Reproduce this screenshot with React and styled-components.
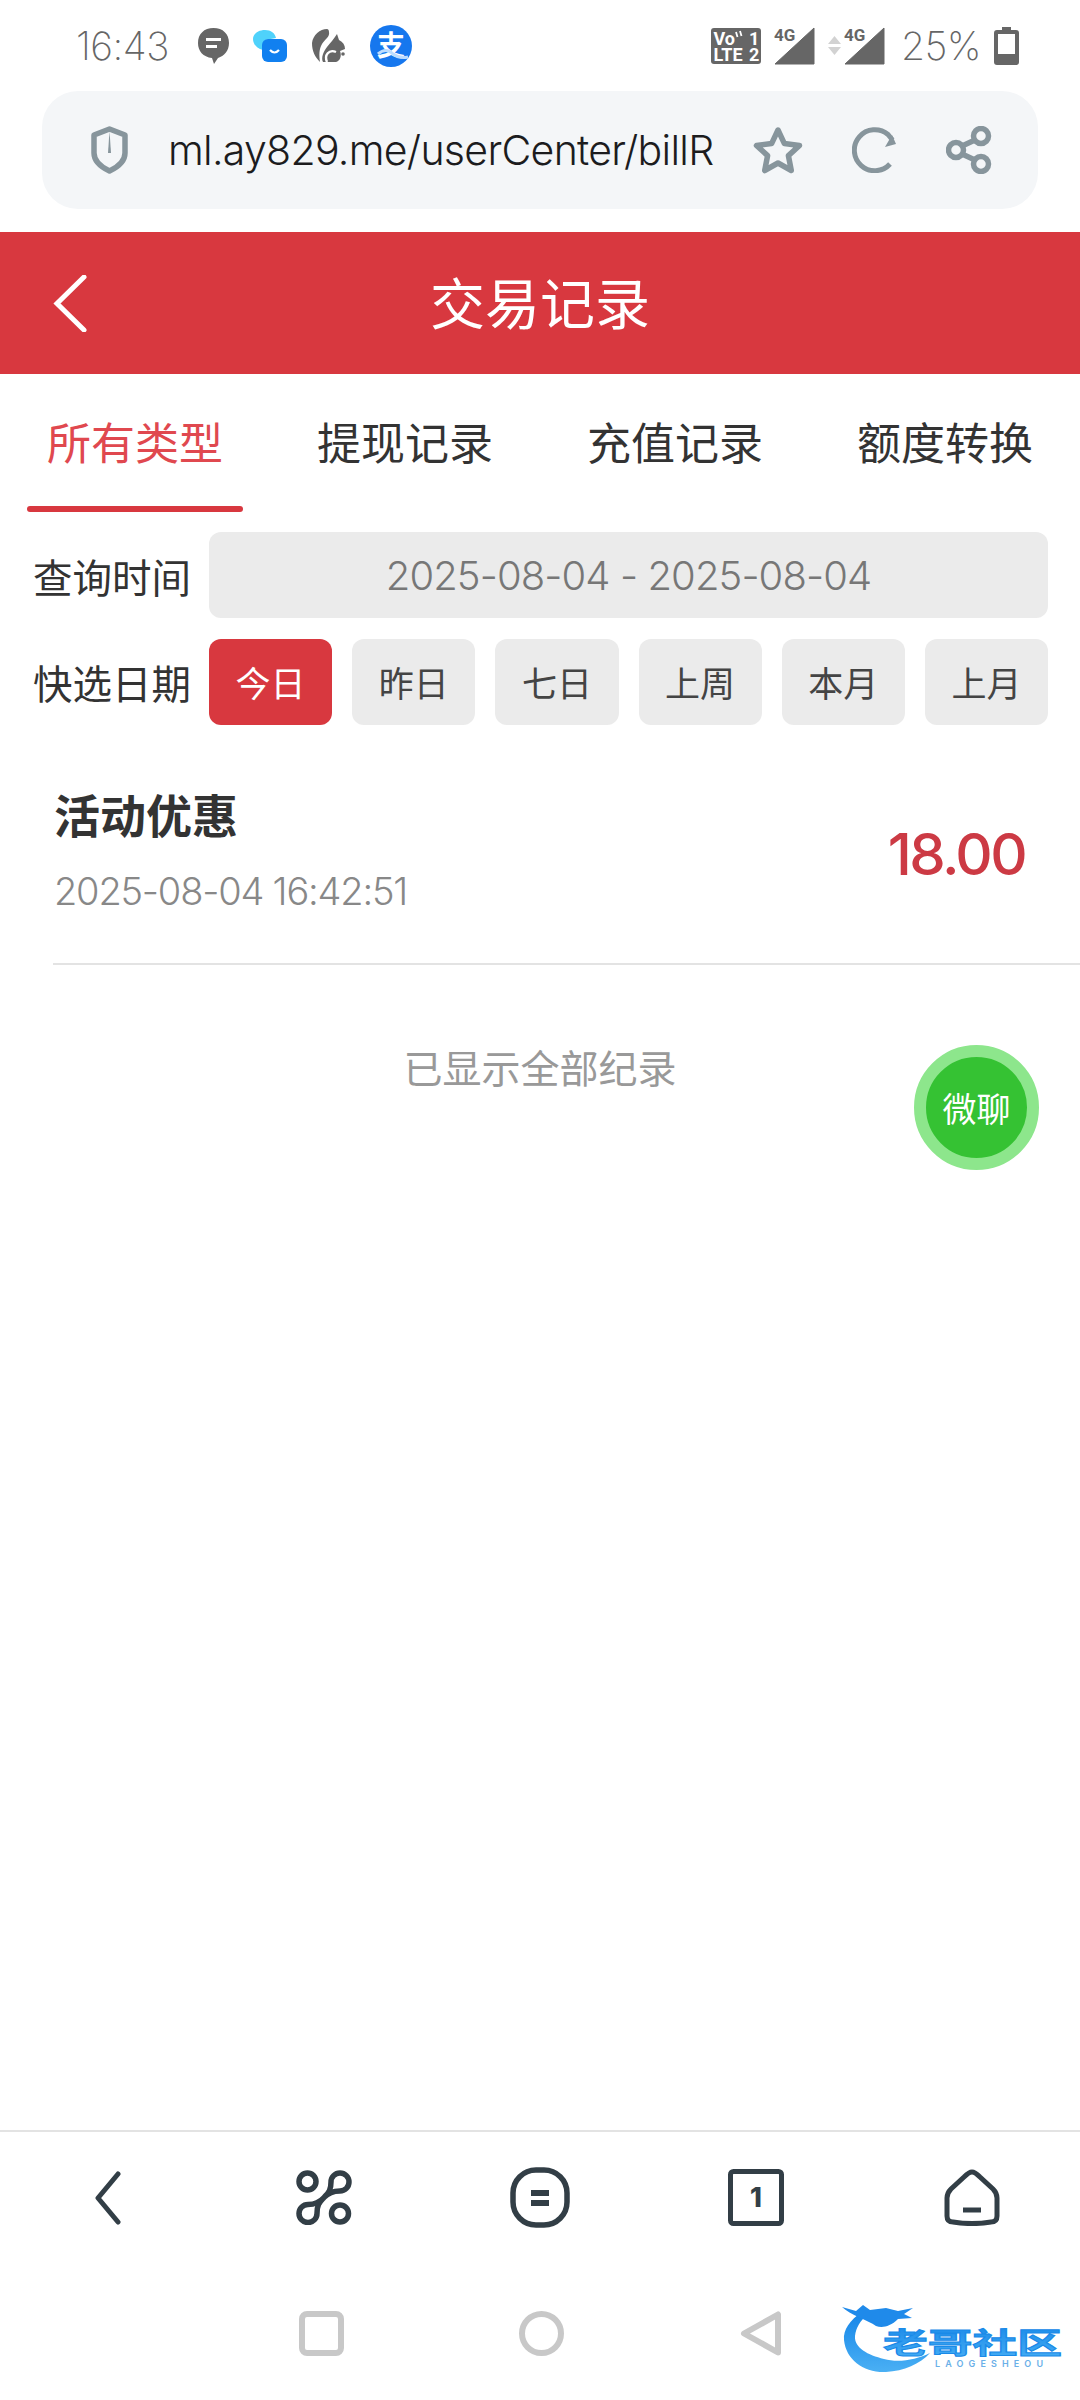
import React from "react";
import styled, { createGlobalStyle } from "styled-components";

const FONT = `Inter, "Noto Sans CJK SC", sans-serif`;
const RED = "#d8383f";
const ICON_GREY = "#87959c";
const ICON_DARK = "#323e46";

const GlobalStyle = createGlobalStyle`
  html, body {
    margin: 0;
    padding: 0;
    background: #fff;
  }
  body {
    font-family: ${FONT};
  }
`;

const Screen = styled.div`
  position: relative;
  width: 1080px;
  height: 2400px;
  display: flex;
  flex-direction: column;
  background: #fff;
  overflow: hidden;
`;

const StatusBar = styled.div`
  height: 91px;
  flex: none;
  display: flex;
  align-items: center;
  justify-content: space-between;
  padding: 0 61px 0 76px;
  color: #666;
`;

const StatusGroup = styled.div`
  display: flex;
  align-items: center;
  gap: ${(p) => p.$gap}px;
`;

const StatusText = styled.span`
  font-size: 39px;
  font-weight: 200;
  letter-spacing: -0.5px;
  margin-right: ${(p) => p.$after || 0}px;
  margin-left: ${(p) => p.$before || 0}px;
`;

const UrlRow = styled.div`
  flex: none;
  padding: 0 42px;
  margin-bottom: 23px;
`;

const UrlBar = styled.div`
  height: 118px;
  display: flex;
  align-items: center;
  padding-left: 49px;
  background: #f4f6f8;
  border-radius: 36px;
`;

const UrlText = styled.div`
  width: 548px;
  margin: 0 36px 0 40px;
  overflow: hidden;
  white-space: nowrap;
  font-size: 41px;
  font-weight: 300;
  color: #1c1c1e;
  letter-spacing: -0.7px;
`;

const UrlActions = styled.div`
  display: flex;
  align-items: center;
  gap: 48px;
`;

const Header = styled.header`
  height: 142px;
  flex: none;
  box-sizing: border-box;
  padding-bottom: 6px;
  position: relative;
  display: flex;
  align-items: center;
  justify-content: center;
  background: ${RED};
  color: #fff;
  font-size: 55px;
  font-weight: 400;
`;

const BackLink = styled.span`
  position: absolute;
  left: 53px;
  top: 43px;
  display: flex;
`;

const Tabs = styled.nav`
  height: 138px;
  flex: none;
  display: grid;
  grid-template-columns: repeat(4, 270px);
`;

const Tab = styled.div`
  position: relative;
  display: flex;
  justify-content: center;
  align-items: center;
  padding-bottom: 4px;
  font-size: 44px;
  color: ${(p) => (p.$active ? "#e0484f" : "#333")};

  ${(p) =>
    p.$active &&
    `&::after {
      content: "";
      position: absolute;
      left: 27px;
      right: 27px;
      bottom: 0;
      height: 6px;
      border-radius: 3px;
      background: ${RED};
    }`}
`;

const Filters = styled.section`
  flex: none;
  padding: 20px 32px 0 33px;
  display: flex;
  flex-direction: column;
  gap: 21px;
`;

const FilterRow = styled.div`
  height: 86px;
  display: flex;
  align-items: center;
`;

const FilterLabel = styled.span`
  width: 176px;
  flex: none;
  padding-bottom: ${(p) => p.$lift || 0}px;
  font-size: 39.5px;
  color: #333;
`;

const DateField = styled.div`
  flex: 1;
  height: 100%;
  display: flex;
  align-items: center;
  justify-content: center;
  background: #ebebeb;
  border-radius: 12px;
  font-size: 40px;
  font-weight: 300;
  letter-spacing: -0.9px;
  color: #777;
`;

const Chips = styled.div`
  flex: 1;
  height: 100%;
  display: flex;
  gap: 20px;
`;

const Chip = styled.div`
  flex: 1;
  display: flex;
  align-items: center;
  justify-content: center;
  padding-bottom: 2px;
  border-radius: 12px;
  font-size: 35px;
  background: ${(p) => (p.$active ? RED : "#ebebeb")};
  color: ${(p) => (p.$active ? "#fff" : "#444")};
`;

const RecordRow = styled.div`
  flex: none;
  height: 240px;
  box-sizing: border-box;
  margin-left: 53px;
  padding: 19px 55px 0 2px;
  border-bottom: 2px solid #e3e3e3;
  display: flex;
  align-items: center;
  justify-content: space-between;
`;

const RecordInfo = styled.div`
  display: flex;
  flex-direction: column;
  gap: 26px;
  margin-top: -6px;
`;

const RecordTitle = styled.div`
  font-size: 46px;
  line-height: 54px;
  font-weight: 700;
  color: #333;
  margin-left: -1px;
`;

const RecordDate = styled.div`
  font-size: 38px;
  line-height: 44px;
  font-weight: 300;
  letter-spacing: -1.2px;
  color: #888;
  margin-left: -1px;
`;

const Amount = styled.div`
  font-size: 58px;
  font-weight: 500;
  letter-spacing: -2.6px;
  color: #cc3a44;
`;

const EndNote = styled.div`
  flex: none;
  padding-top: 82px;
  text-align: center;
  font-size: 39px;
  line-height: 44px;
  color: #999;
`;

const Spacer = styled.div`
  flex: 1;
`;

const ChatButton = styled.div`
  position: absolute;
  right: 41px;
  top: 1045px;
  width: 125px;
  height: 125px;
  box-sizing: border-box;
  border: 12px solid #8de68c;
  border-radius: 50%;
  background: #35c233;
  display: flex;
  align-items: center;
  justify-content: center;
  color: #fff;
  font-size: 34px;
`;

const BottomBar = styled.div`
  height: 131px;
  flex: none;
  border-top: 2px solid #e3e3e3;
  display: grid;
  grid-template-columns: repeat(5, 1fr);
  align-items: center;
  justify-items: center;
`;

const SystemBar = styled.div`
  height: 137px;
  flex: none;
  display: flex;
  align-items: flex-start;
`;

const SystemKeys = styled.div`
  display: grid;
  grid-template-columns: repeat(3, 220px);
  margin-left: 211px;
  justify-items: center;
  padding-top: 48px;
`;

const Watermark = styled.div`
  position: absolute;
  left: 842px;
  top: 2302px;
  display: flex;
`;

const GlyphSvg = styled.svg`
  overflow: visible;
  flex: none;
`;

const ShieldIcon = () => (
  <svg width="37" height="48" viewBox="0 0 37 48">
    <path d="M18.5 3 L34 9 V27 C34 35 27 41 18.5 45 C10 41 3 35 3 27 V9 Z" fill="none" stroke={ICON_GREY} strokeWidth="5.5" strokeLinejoin="round" />
    <path d="M18.5 5 L20 27 H17 Z" fill={ICON_GREY} />
  </svg>
);

const StarIcon = () => (
  <svg width="52" height="49" viewBox="0 0 52 49">
    <polygon
      points="26,4 32.4,17.6 47.5,19.5 36.4,29.6 39.3,44.5 26,37 12.7,44.5 15.6,29.6 4.5,19.5 19.6,17.6"
      fill="none"
      stroke={ICON_GREY}
      strokeWidth="5.5"
      strokeLinejoin="round"
    />
  </svg>
);

const RefreshIcon = () => (
  <svg width="46" height="46" viewBox="0 0 46 46">
    <path d="M38 37 A20.5 20.5 0 1 1 36 7.5 L40.5 13" fill="none" stroke={ICON_GREY} strokeWidth="5" />
    <path d="M44 17 L33 20 L40 8 Z" fill={ICON_GREY} />
  </svg>
);

const ShareIcon = () => (
  <svg width="46" height="48" viewBox="0 0 46 48">
    <g fill="none" stroke={ICON_GREY} strokeWidth="5.5">
      <circle cx="35" cy="10" r="7.5" />
      <circle cx="35" cy="38" r="7.5" />
      <circle cx="10" cy="24" r="7.5" />
      <path d="M16 20 L29 14 M16 28 L29 34" />
    </g>
  </svg>
);

const BubbleIcon = () => (
  <svg width="31" height="36" viewBox="0 0 31 36">
    <path d="M15.5 0 C25 0 31 6 31 15 C31 23 26 28 20 30 L16 36 L14 30 C5 29 0 23 0 15 C0 6 6 0 15.5 0 Z" fill="#666" />
    <path d="M8 11.5 H23 M8 18.5 H19" stroke="#fff" strokeWidth="3" />
  </svg>
);

const ChatAppIcon = () => (
  <svg width="35" height="32" viewBox="0 0 35 32">
    <path d="M12 0 C18 0 22 3 23 8 L12 10 L10 20 C4 19 0 14 0 9 C0 4 5 0 12 0 Z" fill="#4fd2fb" />
    <rect x="9" y="9" width="25" height="23" rx="6" fill="#1180f0" />
    <path d="M17 20 Q21.5 25 26 20" fill="none" stroke="#fff" strokeWidth="2.2" />
  </svg>
);

const SquirrelIcon = () => (
  <svg width="34" height="34" viewBox="0 0 34 34">
    <path d="M15 0 C8 0 1 6 0 14 C0 22 3 28 8 33 C7 26 7 20 10 15 C13 10 18 8 17 3 C17 1 16 0 15 0 Z" fill="#666" />
    <path d="M25 5 L27 11 C31 13 33 16 33 20 L28 22 C30 27 28 32 24 33 L11 33 C9 29 11 23 15 18 C18 14 22 10 25 5 Z" fill="#666" />
    <path d="M24 23 C17 20 12 26 15 33" fill="none" stroke="#fff" strokeWidth="2.4" />
    <circle cx="31" cy="25" r="1.8" fill="#666" />
  </svg>
);

const AlipayIcon = () => (
  <GlyphSvg width="42" height="42" viewBox="0 0 42 42">
    <circle cx="21" cy="21" r="21" fill="#1677ee" />
    <text x="21" y="31" textAnchor="middle" fontSize="28" fontWeight="700" fill="#fff" fontFamily={`"Noto Sans CJK SC", sans-serif`}>支</text>
    <path d="M8 29 Q16 22 23 29 Q30 34 38 32" fill="none" stroke="#bcdcff" strokeWidth="3" />
  </GlyphSvg>
);

const VolteIcon = () => (
  <GlyphSvg width="50" height="36" viewBox="0 0 50 36" fontFamily="Roboto, sans-serif" fontWeight="700" fontSize="18" fill="#fff">
    <rect width="50" height="36" rx="3" fill="#666" />
    <text x="2.5" y="16.5">Vo</text>
    <path d="M25 4 L26.5 9 M29 3 L30.5 8" stroke="#fff" strokeWidth="1.8" />
    <text x="38" y="16.5">1</text>
    <text x="2.5" y="33">LTE</text>
    <text x="38" y="33">2</text>
  </GlyphSvg>
);

const SignalIcon = () => (
  <GlyphSvg width="41" height="38" viewBox="0 0 41 38">
    <path d="M1 37 L40 1 V37 Z" fill="#666" stroke="#666" strokeLinejoin="round" />
    <text x="0" y="14" fontSize="17" fontWeight="700" fontFamily="Roboto, sans-serif" fill="#666">4G</text>
  </GlyphSvg>
);

const ArrowsIcon = () => (
  <svg width="13" height="20" viewBox="0 0 13 20">
    <path d="M6.5 0 L13 8 H0 Z M0 11 H13 L6.5 19 Z" fill="#d2d2d2" />
  </svg>
);

const BatteryIcon = () => (
  <svg width="25" height="38" viewBox="0 0 25 38">
    <path d="M8 0 H17 V3 H22 Q25 3 25 6 V35 Q25 38 22 38 H3 Q0 38 0 35 V6 Q0 3 3 3 H8 Z" fill="#666" />
    <rect x="4" y="7" width="17" height="20" fill="#fff" />
  </svg>
);

const BackIcon = () => (
  <svg width="34" height="57" viewBox="0 0 34 57">
    <path d="M31 2 L4 28.5 L31 55" fill="none" stroke="#fff" strokeWidth="5" strokeLinecap="round" />
  </svg>
);

const NavBackIcon = () => (
  <svg width="26" height="54" viewBox="0 0 26 54">
    <path d="M23 3 L3 27 L23 51" fill="none" stroke={ICON_DARK} strokeWidth="5" strokeLinecap="round" strokeLinejoin="round" />
  </svg>
);

const CommandIcon = () => (
  <svg width="56" height="55" viewBox="0 0 56 55">
    <g fill="none" stroke={ICON_DARK} strokeWidth="5.5" strokeLinejoin="round">
      <circle cx="11.5" cy="11.5" r="8.5" />
      <circle cx="44" cy="43.5" r="8.5" />
      <path d="M35 12 A9 9 0 1 1 44 21 C37 21 32 23 28 27.5 C24 32 21 34 21 43.5 A9 9 0 1 1 12 34.5 C19 34.5 24 32 28 27.5 C32 23 35 21 35 12 Z" />
    </g>
  </svg>
);

const MenuIcon = () => (
  <svg width="60" height="61" viewBox="0 0 60 61">
    <rect x="3" y="3" width="54" height="55" rx="23" fill="none" stroke={ICON_DARK} strokeWidth="5.5" />
    <path d="M21 26 H39 M21 36 H39" stroke={ICON_DARK} strokeWidth="6" />
  </svg>
);

const TabCountIcon = () => (
  <GlyphSvg width="56" height="57" viewBox="0 0 56 57">
    <rect x="2.5" y="2.5" width="51" height="52" rx="3" fill="none" stroke={ICON_DARK} strokeWidth="5" />
    <text x="28" y="38" textAnchor="middle" fontSize="27" fontWeight="800" fill={ICON_DARK} fontFamily="Inter, sans-serif">1</text>
  </GlyphSvg>
);

const HomeIcon = () => (
  <svg width="56" height="57" viewBox="0 0 56 57">
    <path d="M28 3 C25 3 23 5 20 8 L7 20 C4 23 3 25 3 29 V47 C3 51 5 53 9 53 C21 55 35 55 47 53 C51 53 53 51 53 47 V29 C53 25 52 23 49 20 L36 8 C33 5 31 3 28 3 Z" fill="none" stroke={ICON_DARK} strokeWidth="5" />
    <path d="M19 41 H37" stroke={ICON_DARK} strokeWidth="5" />
  </svg>
);

const SquareKey = () => (
  <svg width="45" height="45" viewBox="0 0 45 45">
    <rect x="3" y="3" width="39" height="39" rx="5" fill="none" stroke="#c8c8c8" strokeWidth="6" />
  </svg>
);

const CircleKey = () => (
  <svg width="45" height="45" viewBox="0 0 45 45">
    <circle cx="22.5" cy="22.5" r="19.5" fill="none" stroke="#c8c8c8" strokeWidth="6" />
  </svg>
);

const TriangleKey = () => (
  <svg width="42" height="45" viewBox="0 0 42 45">
    <path d="M38 3.5 V41.5 L4 22.5 Z" fill="none" stroke="#c8c8c8" strokeWidth="6" strokeLinejoin="round" />
  </svg>
);

const LogoMark = () => (
  <GlyphSvg width="222" height="72" viewBox="0 0 222 72">
    <defs>
      <linearGradient id="logoBlue" x1="0" y1="0" x2="0" y2="1">
        <stop offset="0" stopColor="#1585e8" />
        <stop offset="1" stopColor="#4ab0f4" />
      </linearGradient>
    </defs>
    <path d="M20 10 C8 18 1 28 2 38 C4 58 22 71 44 70 C62 69 78 62 88 51 C74 58 56 61 42 57 C26 53 12 46 13 34 C14 26 18 18 26 13 Z" fill="url(#logoBlue)" />
    <path d="M0 5 L14 9 L21 3 L28 8 L44 6 L56 9 L71 6 L62 12 L70 16 L56 17 C48 25 40 26 34 24 C26 18 8 13 0 5 Z" fill="#1f8aea" />
    <text x="41" y="52" fontSize="29" fontWeight="700" fill="url(#logoBlue)" stroke="#1a8ae8" strokeWidth="1" textLength="179" lengthAdjust="spacingAndGlyphs" fontFamily={`"Noto Sans CJK SC", sans-serif`}>老哥社区</text>
    <text x="93" y="65" fontSize="9" fontWeight="600" fill="#6bb0e8" textLength="108" lengthAdjust="spacing" fontFamily="Inter, sans-serif">LAOGESHEOU</text>
  </GlyphSvg>
);

const TABS = ["所有类型", "提现记录", "充值记录", "额度转换"];
const RANGES = ["今日", "昨日", "七日", "上周", "本月", "上月"];

export default function App() {
  return (
    <Screen>
      <GlobalStyle />
      <StatusBar>
        <StatusGroup $gap={24}>
          <StatusText $after={5}>16:43</StatusText>
          <BubbleIcon />
          <ChatAppIcon />
          <SquirrelIcon />
          <AlipayIcon />
        </StatusGroup>
        <StatusGroup $gap={13}>
          <VolteIcon />
          <SignalIcon />
          <StatusGroup $gap={3}>
            <ArrowsIcon />
            <SignalIcon />
          </StatusGroup>
          <StatusText $before={3}>25%</StatusText>
          <BatteryIcon />
        </StatusGroup>
      </StatusBar>

      <UrlRow>
        <UrlBar>
          <ShieldIcon />
          <UrlText>ml.ay829.me/userCenter/billR</UrlText>
          <UrlActions>
            <StarIcon />
            <RefreshIcon />
            <ShareIcon />
          </UrlActions>
        </UrlBar>
      </UrlRow>

      <Header>
        <BackLink>
          <BackIcon />
        </BackLink>
        交易记录
      </Header>

      <Tabs>
        {TABS.map((t, i) => (
          <Tab key={t} $active={i === 0}>
            {t}
          </Tab>
        ))}
      </Tabs>

      <Filters>
        <FilterRow>
          <FilterLabel>查询时间</FilterLabel>
          <DateField>2025-08-04 - 2025-08-04</DateField>
        </FilterRow>
        <FilterRow>
          <FilterLabel $lift={2}>快选日期</FilterLabel>
          <Chips>
            {RANGES.map((r, i) => (
              <Chip key={r} $active={i === 0}>
                {r}
              </Chip>
            ))}
          </Chips>
        </FilterRow>
      </Filters>

      <RecordRow>
        <RecordInfo>
          <RecordTitle>活动优惠</RecordTitle>
          <RecordDate>2025-08-04 16:42:51</RecordDate>
        </RecordInfo>
        <Amount>18.00</Amount>
      </RecordRow>

      <EndNote>已显示全部纪录</EndNote>
      <ChatButton>微聊</ChatButton>

      <Spacer />

      <BottomBar>
        <NavBackIcon />
        <CommandIcon />
        <MenuIcon />
        <TabCountIcon />
        <HomeIcon />
      </BottomBar>
      <SystemBar>
        <SystemKeys>
          <SquareKey />
          <CircleKey />
          <TriangleKey />
        </SystemKeys>
      </SystemBar>
      <Watermark>
        <LogoMark />
      </Watermark>
    </Screen>
  );
}
